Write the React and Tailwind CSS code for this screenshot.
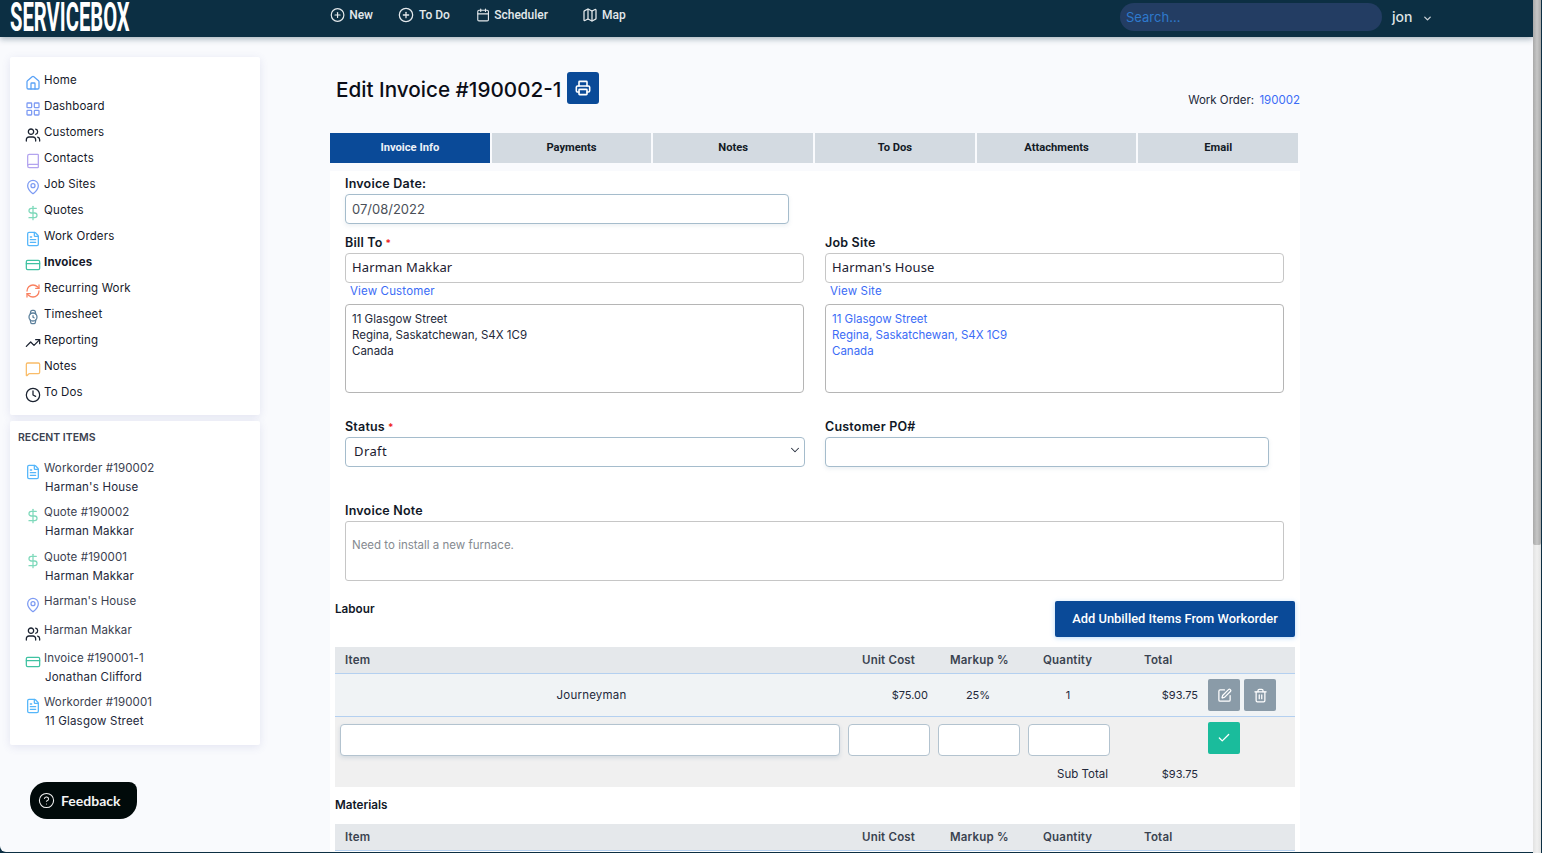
import React from "react";
import {
  Home, LayoutGrid, Users, Book, MapPin, DollarSign, FileText, CreditCard, RefreshCw, Watch,
  TrendingUp, MessageSquare, Clock, CirclePlus, Calendar, Map as MapIcon, Printer, SquarePen,
  Trash2, Check, CircleHelp, ChevronDown,
} from "lucide-react";

const nav = [
  ["Home", Home, "text-[#5aa2f6]"],
  ["Dashboard", LayoutGrid, "text-[#7d9bf3]"],
  ["Customers", Users, "text-[#1a2230]"],
  ["Contacts", Book, "text-[#b3a4ef]"],
  ["Job Sites", MapPin, "text-[#7d9bf3]"],
  ["Quotes", DollarSign, "text-[#7fd9bb]"],
  ["Work Orders", FileText, "text-[#55b6fa]"],
  ["Invoices", CreditCard, "text-[#40c2a2]"],
  ["Recurring Work", RefreshCw, "text-[#f9805f]"],
  ["Timesheet", Watch, "text-[#5b7f9b]"],
  ["Reporting", TrendingUp, "text-[#1a2230]"],
  ["Notes", MessageSquare, "text-[#f9bc68]"],
  ["To Dos", Clock, "text-[#1a2230]"],
];

const recent = [
  ["Workorder #190002", "Harman's House", FileText, "text-[#55b6fa]", "h-[44px]"],
  ["Quote #190002", "Harman Makkar", DollarSign, "text-[#7fd9bb]", "h-[45px]"],
  ["Quote #190001", "Harman Makkar", DollarSign, "text-[#7fd9bb]", "h-[44px]"],
  ["Harman's House", "", MapPin, "text-[#7d9bf3]", "h-[29px]"],
  ["Harman Makkar", "", Users, "text-[#1a2230]", "h-[28px]"],
  ["Invoice #190001-1", "Jonathan Clifford", CreditCard, "text-[#40c2a2]", "h-[44px]"],
  ["Workorder #190001", "11 Glasgow Street", FileText, "text-[#55b6fa]", "h-[44px]"],
];

const tabs = ["Invoice Info", "Payments", "Notes", "To Dos", "Attachments", "Email"];

function TopLink({ icon: Icon, label, className, gap = "gap-[4px]" }) {
  return (
    <div className={"flex items-center mb-[7px] text-[12px] font-medium text-[#e4e9ec] " + gap + " " + className}>
      <Icon size={16} strokeWidth={1.9} />
      <span>{label}</span>
    </div>
  );
}

function Label({ children, req }) {
  return (
    <div className="h-[17px] pt-[1px] mb-[2px] text-[12.5px] leading-4 font-semibold tracking-[0.2px] text-[#111827]">
      {children}
      {req && <span className="ml-[3px] text-[10px] text-[#ee2222]">*</span>}
    </div>
  );
}

function TableHead() {
  return (
    <div className="grid grid-cols-[513px_90px_90px_90px_90px_87px] h-[27px] pt-[2px] items-center bg-[#e5e8eb] border-b border-[#b4d0f0] text-[11.5px] font-semibold tracking-[0.2px] text-[#3a4350]">
      <div className="pl-[10px]">Item</div>
      <div className="pl-[14px]">Unit Cost</div>
      <div className="pl-[12px]">Markup %</div>
      <div className="pl-[15px]">Quantity</div>
      <div className="pl-[26px]">Total</div>
      <div />
    </div>
  );
}

const cellInput = "h-[32px] bg-white border border-[#b3c3cf] rounded-[4px]";
const nameInput = "block w-full h-[30px] px-[6px] pb-[2px] border border-[#c6c6c6] rounded-[4px] text-[13px] tracking-[0.12px] font-['Noto_Sans',sans-serif] text-[#1b2030] outline-none";

export default function App() {
  return (
    <div className="h-[853px] w-[1542px] overflow-hidden bg-[#0c2f43] flex font-['Inter',sans-serif] text-[#15192a]">
      <div className="w-[1533px] h-[852px] flex flex-col bg-[#f9fafd] rounded-bl-[6px] overflow-hidden">
        <header className="h-[37px] shrink-0 bg-[#0c2f43] flex items-center shadow-[0_2px_6px_rgba(12,47,67,0.35)] relative font-['Roboto',sans-serif]">
          <div className="ml-[10px] w-[120px] h-[37px]">
            <div className="origin-top-left w-max scale-x-[0.505] text-[40px] leading-[36px] font-bold text-white whitespace-nowrap">SERVICEBOX</div>
          </div>
          <TopLink icon={CirclePlus} label="New" className="ml-[200px] w-[43px]" />
          <TopLink icon={CirclePlus} label="To Do" gap="gap-[5px]" className="ml-[25px] w-[53px]" />
          <TopLink icon={Calendar} label="Scheduler" className="ml-[25px] w-[72px]" />
          <TopLink icon={MapIcon} label="Map" className="ml-[34px] w-[44px]" />
          <div className="ml-[494px] w-[262px] h-[28px] mb-[3px] pt-[1px] rounded-full bg-[#233d63] pl-[6px] flex items-center text-[13px] font-['Inter'] text-[#2e79cc]">Search...</div>
          <div className="ml-[10px] mb-[4px] text-[14px] font-medium font-['Inter'] text-[#dfe3e6]">jon</div>
          <ChevronDown size={11} strokeWidth={3} className="ml-[10px] mb-[1px] text-[#c9d0d5]" />
        </header>

        <div className="flex flex-1 min-h-0">
          <aside className="w-[330px] shrink-0 pl-[10px] pt-[20px]">
            <div className="w-[250px] bg-white rounded-[2px] shadow-[0_2px_8px_rgba(90,100,170,0.14)] py-[10px]">
              {nav.map(([label, Icon, color]) => (
                <div key={label} className="h-[26px] flex items-center pl-[15px] gap-[3px] text-[11.5px] tracking-[0.15px]">
                  <Icon size={16} strokeWidth={1.9} className={"mt-[5px] shrink-0 " + color} />
                  <span className={label === "Invoices" ? "pt-[2px] font-bold" : "pt-[2px]"}>{label}</span>
                </div>
              ))}
            </div>
            <div className="w-[250px] mt-[6px] h-[324px] bg-white rounded-[2px] shadow-[0_2px_8px_rgba(90,100,170,0.14)] pt-[9px]">
              <div className="pl-[8px] h-4 text-[10.5px] leading-4 font-semibold text-[#3b4150]">RECENT ITEMS</div>
              <div className="mt-[13px]">
                {recent.map(([title, sub, Icon, color, h]) => (
                  <div key={title} className={h + " pl-[15px]"}>
                    <div className="flex items-center h-[20px] gap-[3px] text-[11.5px] tracking-[0.12px] text-[#3b4150]">
                      <Icon size={16} strokeWidth={1.9} className={"mt-[5px] shrink-0 " + color} />
                      <span>{title}</span>
                    </div>
                    {sub && <div className="pl-[20px] h-[18px] leading-[17px] text-[11.5px] tracking-[0.2px] text-[#23283a]">{sub}</div>}
                  </div>
                ))}
              </div>
            </div>
            <div className="mt-[37px] ml-[20px] w-[107px] h-[37px] pb-[1px] rounded-[17px] rounded-tr-[8px] bg-[#010a0a] flex items-center pl-[8px] gap-[6px] text-[14px] font-bold font-['Lato',sans-serif] text-[#f4f4f4]">
              <CircleHelp size={17} strokeWidth={1.5} />
              <span>Feedback</span>
            </div>
          </aside>

          <main className="w-[970px] shrink-0">
            <div className="h-[96px] relative">
              <div className="flex items-start pt-[35px] pl-[6px]">
                <h1 className="pt-[2px] text-[20.7px] leading-[32px] font-medium text-[#0b0d17]">Edit Invoice #190002-1</h1>
                <div className="ml-[6px] w-[32px] h-[32px] rounded-[3px] bg-[#0a4a98] flex items-center justify-center text-white">
                  <Printer size={16} strokeWidth={2.4} />
                </div>
              </div>
              <div className="absolute right-0 top-[55px] text-[11.5px] leading-4 text-[#23283a]">
                Work Order: <span className="ml-[2px] text-[#3b6cf6]">190002</span>
              </div>
            </div>

            <div className="flex gap-[2px] w-[968px]">
              {tabs.map((t, i) => (
                <div key={t} className={"flex-1 h-[30px] flex items-center justify-center text-[11.2px] font-bold font-['Roboto',sans-serif] " + (i === 0 ? "bg-[#0a4a98] text-[#eef2f8]" : "bg-[#d3dae1] text-[#141b26]")}>{t}</div>
              ))}
            </div>

            <div className="mt-[8px] bg-white px-[5px] pt-[4px] h-[700px]">
              <div className="px-[10px]">
                <Label>Invoice Date:</Label>
                <input readOnly value="07/08/2022" className="block w-[444px] h-[30px] px-[6px] bg-white border border-[#a5bccc] rounded-[4px] shadow-[0_2px_4px_rgba(100,130,160,0.12)] text-[13px] text-[#4a5058] outline-none" />
                <div className="grid grid-cols-[459px_459px] gap-x-[21px] mt-[10px]">
                  <div>
                    <Label req>Bill To</Label>
                    <input readOnly value="Harman Makkar" className={nameInput} />
                    <div className="h-4 pl-[5px] text-[11.5px] leading-4 tracking-[0.15px] text-[#3b6cf6]">View Customer</div>
                    <textarea readOnly value={"11 Glasgow Street\nRegina, Saskatchewan, S4X 1C9\nCanada"} className="block mt-[5px] w-full h-[89px] px-[6px] pt-[6px] border border-[#b5b5b5] rounded-[4px] resize-none text-[11.5px] leading-4 text-[#23283a] outline-none" />
                  </div>
                  <div>
                    <Label>Job Site</Label>
                    <input readOnly value="Harman's House" className={nameInput} />
                    <div className="h-4 pl-[5px] text-[11.5px] leading-4 tracking-[0.15px] text-[#3b6cf6]">View Site</div>
                    <textarea readOnly value={"11 Glasgow Street\nRegina, Saskatchewan, S4X 1C9\nCanada"} className="block mt-[5px] w-full h-[89px] px-[6px] pt-[6px] border border-[#b5b5b5] rounded-[4px] resize-none text-[11.5px] leading-4 text-[#3b6cf6] outline-none" />
                  </div>
                </div>
                <div className="grid grid-cols-[459px_459px] gap-x-[21px] mt-[25px]">
                  <div>
                    <Label req>Status</Label>
                    <div className="relative w-[460px]">
                      <select defaultValue="Draft" className="block appearance-none w-full h-[30px] pl-[8px] pb-[1px] bg-white border border-[#a5bccc] rounded-[4px] text-[13px] tracking-[0.4px] font-['Noto_Sans',sans-serif] text-[#1b2030] outline-none">
                        <option>Draft</option>
                      </select>
                      <ChevronDown size={14} strokeWidth={1.8} className="absolute right-[3px] top-[6px] text-[#2a3140]" />
                    </div>
                  </div>
                  <div>
                    <Label>Customer PO#</Label>
                    <input readOnly className="block w-[444px] h-[30px] bg-white border border-[#a5bccc] rounded-[4px] shadow-[0_2px_4px_rgba(100,130,160,0.12)] outline-none" />
                  </div>
                </div>
                <div className="mt-[35px]">
                  <Label>Invoice Note</Label>
                  <textarea readOnly value="Need to install a new furnace." className="block w-[939px] h-[60px] px-[6px] pt-[15px] border border-[#c6c6c6] rounded-[3px] resize-none text-[11.5px] leading-4 text-[#858a90] outline-none" />
                </div>
              </div>

              <div className="mt-[20px] flex justify-between items-start">
                <div className="h-4 text-[11.7px] leading-4 font-semibold text-[#111827]">Labour</div>
                <div className="w-[240px] h-[36px] rounded-[2px] bg-[#0a4a98] flex items-center justify-center text-[12.9px] font-medium font-['Roboto',sans-serif] text-white shadow-[0_1px_5px_rgba(80,160,240,0.4)]">Add Unbilled Items From Workorder</div>
              </div>

              <div className="mt-[10px]">
                <TableHead />
                <div className="grid grid-cols-[513px_90px_90px_90px_90px_87px] h-[43px] items-center bg-[#f0f3f5] border-b border-[#b4d0f0] text-[11px] text-[#23283a]">
                  <div className="text-center pt-[2px] text-[11.5px] tracking-[0.2px]">Journeyman</div>
                  <div className="text-right pr-[10px]">$75.00</div>
                  <div className="text-center pr-[10px]">25%</div>
                  <div className="text-center pr-[10px]">1</div>
                  <div className="text-right pr-[10px]">$93.75</div>
                  <div className="flex gap-[4px]">
                    <div className="w-[32px] h-[32px] rounded-[2px] bg-[#8a9ba8] flex items-center justify-center text-white"><SquarePen size={15} strokeWidth={2} /></div>
                    <div className="w-[32px] h-[32px] rounded-[2px] bg-[#8a9ba8] flex items-center justify-center text-white"><Trash2 size={15} strokeWidth={2} /></div>
                  </div>
                </div>
                <div className="h-[70px] bg-[#f0f0f0] text-[11px] leading-4 text-[#23283a]">
                  <div className="grid grid-cols-[513px_90px_90px_90px_90px_87px] h-[49px]">
                    <div className="pl-[5px] pt-[7px]"><div className={cellInput + " w-[500px] shadow-[0_2px_4px_rgba(100,130,160,0.2)]"} /></div>
                    <div className="pt-[7px]"><div className={cellInput + " w-[82px]"} /></div>
                    <div className="pt-[7px]"><div className={cellInput + " w-[82px]"} /></div>
                    <div className="pt-[7px]"><div className={cellInput + " w-[82px]"} /></div>
                    <div />
                    <div className="pt-[5px]">
                      <div className="w-[32px] h-[32px] rounded-[2px] bg-[#1abc9c] flex items-center justify-center text-white"><Check size={14} strokeWidth={2.2} /></div>
                    </div>
                  </div>
                  <div className="grid grid-cols-[513px_90px_90px_90px_90px_87px]">
                    <div /><div /><div />
                    <div className="text-right pr-[10px] whitespace-nowrap text-[11.5px]">Sub Total</div>
                    <div className="text-right pr-[10px]">$93.75</div>
                    <div />
                  </div>
                </div>
              </div>

              <div className="mt-[10px] h-4 text-[11.7px] leading-4 font-semibold text-[#111827]">Materials</div>
              <div className="mt-[11px]"><TableHead /></div>
            </div>
          </main>
        </div>
      </div>

      <div className="w-[8px] h-[853px] shrink-0 bg-gradient-to-r from-[#e2e2e2] via-[#f0f0f0] to-[#e2e2e2]">
        <div className="h-[545px] rounded-b-[2px] bg-gradient-to-r from-[#a9a9a9] via-[#c6c6c6] to-[#a9a9a9]" />
      </div>
    </div>
  );
}
